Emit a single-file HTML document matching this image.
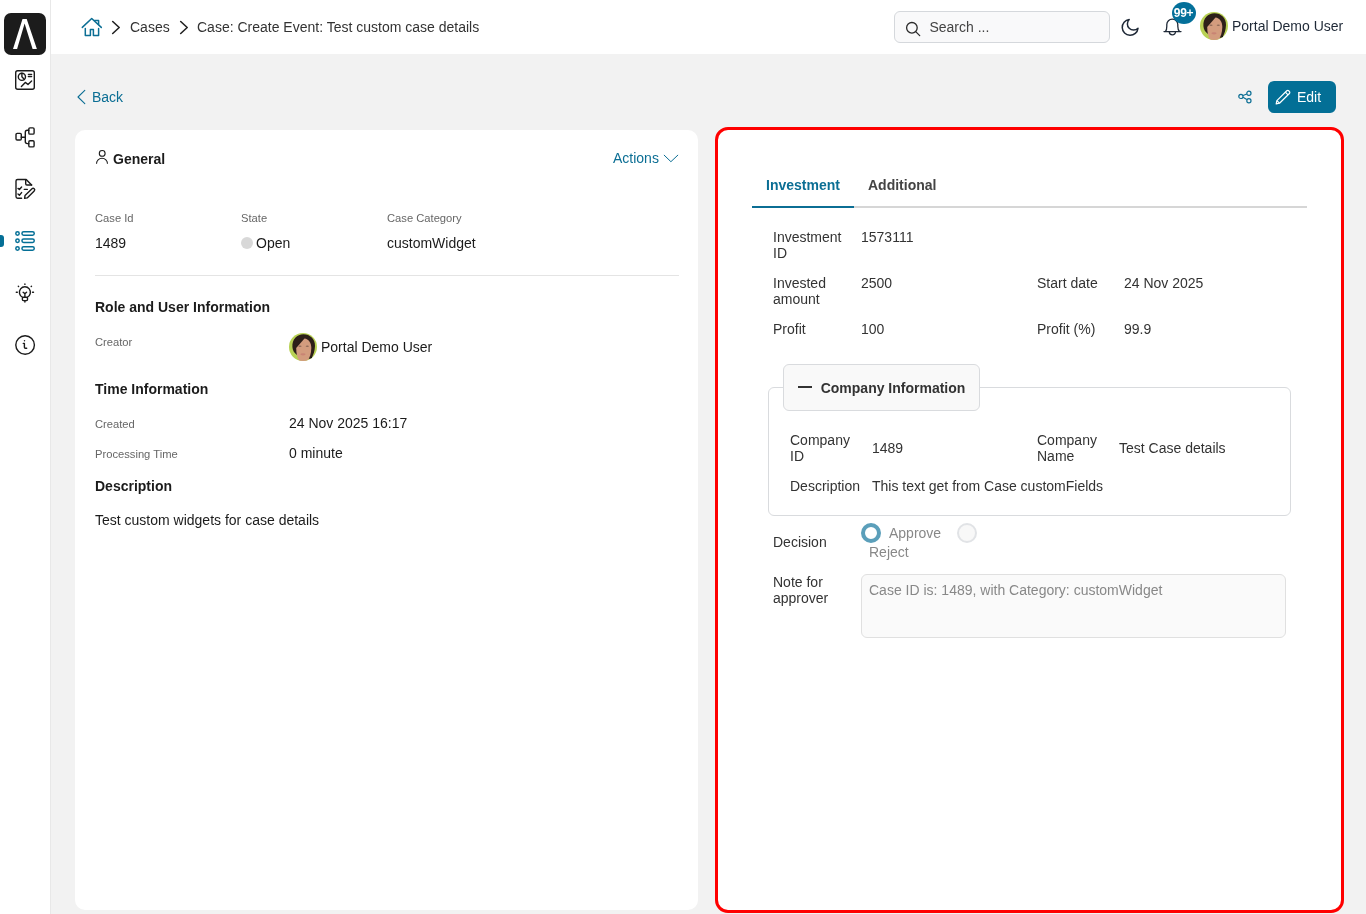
<!DOCTYPE html>
<html><head><meta charset="utf-8">
<style>
*{box-sizing:border-box;margin:0;padding:0}
html,body{width:1366px;height:914px;overflow:hidden;background:#f2f2f2;font-family:"Liberation Sans",sans-serif;color:#1b1b1b;font-size:14px}
body{will-change:transform;position:relative}
.abs{position:absolute;white-space:nowrap;line-height:16px}
svg{position:absolute;overflow:visible}
#side{position:absolute;left:0;top:0;width:51px;height:914px;background:#fff;border-right:1px solid #e8e8e8}
#top{position:absolute;left:51px;top:0;width:1315px;height:54px;background:#fff}
.logo{position:absolute;left:4px;top:13px;width:42px;height:42px;background:#1c1c1c;border-radius:7px}
.teal{color:#0b6e94}
.card{position:absolute;background:#fff;border-radius:10px}
.lbl{font-size:11.2px;color:#666;line-height:13px}
.b{font-weight:700}
.dk{color:#333}
</style></head><body>
<svg width="0" height="0" style="position:absolute;left:0;top:0">
  <defs>
    <clipPath id="avc"><circle cx="14" cy="14" r="14"/></clipPath>
    <symbol id="av" viewBox="0 0 28 28">
      <g clip-path="url(#avc)">
        <rect width="28" height="28" fill="#b8d154"/>
        <path d="M3.4 14C3 6 8 1.2 14.5 1.2C21 1.2 26.3 6 26 13C25.8 18 24.5 22 22.5 25L20 26L8 22C5 20 3.6 17 3.4 14Z" fill="#2d1f19"/>
        <path d="M7.2 15L15.5 5.4C19.5 5.8 22.3 9.5 22.3 15C22.3 21 20.5 26 17.5 28.5H11C8.5 26 7.2 21 7.2 15Z" fill="#d39c7e"/>
        <ellipse cx="11" cy="13.2" rx="1.6" ry="0.8" fill="#7a5a4c" opacity=".75"/>
        <ellipse cx="18.3" cy="13.2" rx="1.6" ry="0.8" fill="#7a5a4c" opacity=".75"/>
        <ellipse cx="14" cy="21.3" rx="2.6" ry="1.1" fill="#c98474"/>
        <path d="M21.5 24.5L23.5 23.5L22 27Z" fill="#111"/>
      </g>
    </symbol>
  </defs>
</svg>
<!-- SIDEBAR -->
<div id="side">
  <div class="logo">
    <svg width="42" height="42" viewBox="0 0 42 42" style="left:0;top:0">
      <polygon points="18.5,6.1 22.7,6.1 32.9,36 28.6,36 20.6,10.5 13.1,36 9,36" fill="#fff"/>
    </svg>
  </div>
  <!-- dashboard -->
  <svg width="50" height="40" style="left:0;top:60px" fill="none" stroke="#1b1b1b" stroke-width="1.4" stroke-linecap="round" stroke-linejoin="round">
    <rect x="15.7" y="10.7" width="18.6" height="18.6" rx="2"/>
    <circle cx="21.9" cy="16.8" r="3.6"/>
    <path d="M21.9 13.2V16.8L24.4 19.4"/>
    <path d="M28.4 14.4H31.6M28.4 16.5H31.6"/>
    <path d="M21.4 26.4L25.3 22.4L28 24.5L31.6 21.1"/>
  </svg>
  <!-- process -->
  <svg width="50" height="40" style="left:0;top:117px" fill="none" stroke="#1b1b1b" stroke-width="1.4" stroke-linecap="round" stroke-linejoin="round">
    <rect x="16" y="16.4" width="5.3" height="6.6" rx="1.2"/>
    <rect x="28.8" y="10.9" width="5.3" height="6.2" rx="1.2"/>
    <rect x="28.8" y="23.7" width="5.3" height="6.2" rx="1.2"/>
    <path d="M21.3 20.2H25.3M28.8 13.3H27.3a2 2 0 0 0 -2 2V24.6a2 2 0 0 0 2 2H28.8"/>
  </svg>
  <!-- tasks -->
  <svg width="50" height="40" style="left:0;top:169px" fill="none" stroke="#1b1b1b" stroke-width="1.4" stroke-linecap="round" stroke-linejoin="round">
    <path d="M21.6 29.2H17.6a1.6 1.6 0 0 1 -1.6 -1.6V12.1a1.6 1.6 0 0 1 1.6 -1.6H26.2L31.6 16.1"/>
    <path d="M25.7 10.6V14.8a1.2 1.2 0 0 0 1.2 1.2H31.6"/>
    <path d="M18 19.4L19.4 20.5L21.6 18M18 25L19.4 26.3L21.6 23.6"/>
    <path d="M24.3 20.4H27.3"/>
    <path d="M24.6 29.3L25 26.6L32 19.8a1.5 1.5 0 0 1 2.2 2.2L27.2 28.9Z"/>
  </svg>
  <!-- cases active -->
  <div style="position:absolute;left:-3px;top:235px;width:7px;height:12px;border-radius:3px;background:#046f96"></div>
  <svg width="50" height="40" style="left:0;top:221px" fill="none" stroke="#046f96" stroke-width="1.5">
    <rect x="15.8" y="10.8" width="3.4" height="3.4" rx="1.7"/>
    <rect x="15.8" y="18.1" width="3.4" height="3.4" rx="1.7"/>
    <rect x="15.8" y="25.8" width="3.4" height="3.4" rx="1.7"/>
    <rect x="21.95" y="10.8" width="12.3" height="3.4" rx="1.7"/>
    <rect x="21.95" y="18.1" width="12.3" height="3.4" rx="1.7"/>
    <rect x="21.95" y="25.8" width="12.3" height="3.4" rx="1.7"/>
  </svg>
  <!-- bulb -->
  <svg width="50" height="40" style="left:0;top:273px" fill="none" stroke="#1b1b1b" stroke-width="1.4" stroke-linecap="round" stroke-linejoin="round">
    <path d="M22.6 24.3a5.5 5.5 0 1 1 4.6 0"/>
    <rect x="22.4" y="24.3" width="5.1" height="3.3" rx="1"/>
    <path d="M24.9 27.6V29.1"/>
    <path d="M23.1 19.3L24.9 20.6L26.6 19.3M24.9 20.6V24.2"/>
    <path d="M24.9 11V11.4M18.3 13.3L18.6 13.6M31.5 13.3L31.2 13.6M16.3 19.3H17.3M32.5 19.3H33.5"/>
  </svg>
  <!-- info -->
  <svg width="50" height="40" style="left:0;top:325px" fill="none" stroke="#1b1b1b" stroke-width="1.4" stroke-linecap="round" stroke-linejoin="round">
    <circle cx="25.1" cy="20" r="9.3"/>
    <path d="M24.5 15.6V15.8"/>
    <path d="M23.3 18.4H24.4V22.2a1 1 0 0 0 1 1H26.7"/>
  </svg>
</div>

<!-- TOPBAR -->
<div id="top">
  <svg width="30" height="30" style="left:26px;top:10px" fill="none" stroke="#0b6e94" stroke-width="1.5" stroke-linecap="round" stroke-linejoin="round">
    <path d="M5.3 17.4L14.7 8.5L24.3 17.4"/>
    <path d="M17.6 10.4H21.6V14.4"/>
    <path d="M8.3 18.6V25.5H13.4V19.5H16.4V25.5H21.6V18.6"/>
  </svg>
  <svg width="14" height="20" style="left:58px;top:17px" fill="none" stroke="#222" stroke-width="1.6" stroke-linecap="round" stroke-linejoin="round">
    <path d="M3.7 4.5L10.2 10.5L3.7 16.5"/>
  </svg>
  <div class="abs dk" style="left:79px;top:19px;color:#333">Cases</div>
  <svg width="14" height="20" style="left:126px;top:17px" fill="none" stroke="#222" stroke-width="1.6" stroke-linecap="round" stroke-linejoin="round">
    <path d="M3.7 4.5L10.2 10.5L3.7 16.5"/>
  </svg>
  <div class="abs" style="left:146px;top:19px;color:#333">Case: Create Event: Test custom case details</div>
  <div style="position:absolute;left:843px;top:11px;width:216px;height:32px;background:#f9f9fa;border:1px solid #d5d8dc;border-radius:6px"></div>
  <svg width="24" height="24" style="left:849px;top:16px" fill="none" stroke="#2b2b2b" stroke-width="1.3" stroke-linecap="round">
    <circle cx="11.9" cy="11.8" r="5.3"/>
    <path d="M15.7 15.6L19.7 19.6"/>
  </svg>
  <div class="abs" style="left:878.4px;top:19px;color:#444">Search ...</div>
  <!-- moon -->
  <svg width="30" height="30" viewBox="1120 10 30 30" style="left:1069px;top:10px" fill="none" stroke="#1f2937" stroke-width="1.5" stroke-linecap="round" stroke-linejoin="round">
    <path d="M1129.2 19.5A7.9 7.9 0 1 0 1138 28.3A6.2 6.2 0 0 1 1129.2 19.5Z"/>
  </svg>
  <!-- bell -->
  <svg width="24" height="24" style="left:1109px;top:15px" fill="none" stroke="#1f2937" stroke-width="1.3" stroke-linecap="round" stroke-linejoin="round">
    <path d="M4 16.6H21M5.5 16.4C6.8 15 6.8 13.5 6.8 11.3V9.6a5.5 5.5 0 0 1 11 0V11.3C17.8 13.5 17.8 15 19.5 16.4"/>
    <path d="M9.3 16.8a3.1 3.1 0 0 0 6.2 0"/>
  </svg>
  <div style="position:absolute;left:1121px;top:2px;width:24px;height:22px;border-radius:50%;background:#04709a"></div>
  <div class="abs b" style="left:1121px;top:7px;width:23px;text-align:center;color:#fff;font-size:12px;line-height:13px;letter-spacing:-0.3px">99+</div>
  <!-- avatar -->
  <svg width="28" height="28" viewBox="0 0 28 28" style="left:1149px;top:12px"><use href="#av"/></svg>
  <div class="abs" style="left:1181px;top:18px;color:#1f2937">Portal Demo User</div>
</div>

<!-- BACK / EDIT -->
<svg width="12" height="20" style="left:74px;top:87px" fill="none" stroke="#0b6e94" stroke-width="1.1" stroke-linecap="round" stroke-linejoin="round">
  <path d="M10.8 3.3L4 10L10.8 16.7"/>
</svg>
<div class="abs teal" style="left:92px;top:89px">Back</div>
<svg width="20" height="20" style="left:1235px;top:87px" fill="none" stroke="#0b6e94" stroke-width="1.2">
  <circle cx="5.9" cy="9.4" r="2.1"/>
  <circle cx="13.9" cy="6.3" r="2.1"/>
  <circle cx="13.9" cy="13.7" r="2.1"/>
  <path d="M8 8.5L11.8 7M8 10.3L11.8 12.6"/>
</svg>
<div style="position:absolute;left:1268px;top:81px;width:68px;height:32px;background:#036f96;border-radius:6px"></div>
<svg width="20" height="20" style="left:1273px;top:87px" fill="none" stroke="#fff" stroke-width="1.2" stroke-linejoin="round">
  <path d="M3.2 16.8L3.9 13.6L13.8 3.8a1.4 1.4 0 0 1 2 0L16.4 4.5a1.4 1.4 0 0 1 0 2L6.5 16.2Z"/>
  <path d="M12.4 5.2L15 7.8M3.9 13.6L6.5 16.2"/>
</svg>
<div class="abs" style="left:1297px;top:89px;color:#fff">Edit</div>

<!-- LEFT CARD -->
<div class="card" style="left:75px;top:130px;width:623px;height:780px">
  <svg width="16" height="20" style="left:18px;top:16px" fill="none" stroke="#1b1b1b" stroke-width="1.1">
    <circle cx="9.2" cy="7.4" r="2.9"/>
    <path d="M3.5 17.8a5.5 5.5 0 0 1 11 0"/>
  </svg>
  <div class="abs b" style="left:38px;top:21px">General</div>
  <div class="abs teal" style="left:538px;top:20px">Actions</div>
  <svg width="18" height="12" style="left:587px;top:22px" fill="none" stroke="#0b6e94" stroke-width="1" stroke-linecap="round" stroke-linejoin="round">
    <path d="M2.2 3.2L8.9 9.7L15.8 3.2"/>
  </svg>
  <div class="abs lbl" style="left:20px;top:82px">Case Id</div>
  <div class="abs lbl" style="left:166px;top:82px">State</div>
  <div class="abs lbl" style="left:312px;top:82px">Case Category</div>
  <div class="abs" style="left:20px;top:105px">1489</div>
  <div style="position:absolute;left:166px;top:107px;width:12px;height:12px;border-radius:50%;background:#d8d8d8"></div>
  <div class="abs" style="left:181px;top:105px">Open</div>
  <div class="abs" style="left:312px;top:105px">customWidget</div>
  <div style="position:absolute;left:20px;top:145px;width:584px;height:1px;background:#e4e4e4"></div>
  <div class="abs b" style="left:20px;top:169px">Role and User Information</div>
  <div class="abs lbl" style="left:20px;top:206px">Creator</div>
  <svg width="28" height="28" viewBox="0 0 28 28" style="left:214px;top:203px"><use href="#av"/></svg>
  <div class="abs" style="left:246px;top:209px">Portal Demo User</div>
  <div class="abs b" style="left:20px;top:251px">Time Information</div>
  <div class="abs lbl" style="left:20px;top:288px">Created</div>
  <div class="abs" style="left:214px;top:285px">24 Nov 2025 16:17</div>
  <div class="abs lbl" style="left:20px;top:318px">Processing Time</div>
  <div class="abs" style="left:214px;top:315px">0 minute</div>
  <div class="abs b" style="left:20px;top:348px">Description</div>
  <div class="abs" style="left:20px;top:382px">Test custom widgets for case details</div>
</div>

<!-- RIGHT CARD -->
<div class="card" style="left:715px;top:127px;width:629px;height:786px;border:3px solid #f00;border-radius:13px"></div>
<div id="rc" style="position:absolute;left:0;top:0">
  <div class="abs b teal" style="left:766px;top:177px">Investment</div>
  <div class="abs b" style="left:868px;top:177px;color:#444">Additional</div>
  <div style="position:absolute;left:752px;top:206px;width:555px;height:2px;background:#d6d6d6"></div>
  <div style="position:absolute;left:752px;top:206px;width:102px;height:2px;background:#0b6e94"></div>

  <div class="abs dk" style="left:773px;top:229px">Investment<br>ID</div>
  <div class="abs dk" style="left:861px;top:229px">1573111</div>
  <div class="abs dk" style="left:773px;top:275px">Invested<br>amount</div>
  <div class="abs dk" style="left:861px;top:275px">2500</div>
  <div class="abs dk" style="left:1037px;top:275px">Start date</div>
  <div class="abs dk" style="left:1124px;top:275px">24 Nov 2025</div>
  <div class="abs dk" style="left:773px;top:321px">Profit</div>
  <div class="abs dk" style="left:861px;top:321px">100</div>
  <div class="abs dk" style="left:1037px;top:321px">Profit (%)</div>
  <div class="abs dk" style="left:1124px;top:321px">99.9</div>

  <div style="position:absolute;left:768px;top:387px;width:523px;height:129px;border:1px solid #d9dbde;border-radius:6px"></div>
  <div style="position:absolute;left:783px;top:364px;width:197px;height:47px;border:1px solid #d9dbde;border-radius:6px;background:#f9f9f9"></div>
  <div style="position:absolute;left:798px;top:386.2px;width:14px;height:1.6px;background:#333"></div>
  <div class="abs b dk" style="left:820.7px;top:380px">Company Information</div>
  <div class="abs dk" style="left:790px;top:432px">Company<br>ID</div>
  <div class="abs dk" style="left:872px;top:440px">1489</div>
  <div class="abs dk" style="left:1037px;top:432px">Company<br>Name</div>
  <div class="abs dk" style="left:1119px;top:440px">Test Case details</div>
  <div class="abs dk" style="left:790px;top:478px">Description</div>
  <div class="abs dk" style="left:872px;top:478px">This text get from Case customFields</div>

  <div class="abs dk" style="left:773px;top:534px">Decision</div>
  <div style="position:absolute;left:861px;top:523px;width:20px;height:20px;border-radius:50%;border:4px solid #5b9fba;background:#fff"></div>
  <div class="abs" style="left:889px;top:525px;color:#888">Approve</div>
  <div style="position:absolute;left:957px;top:523px;width:20px;height:20px;border-radius:50%;border:2px solid #e1e3e6;background:#f8f8f8"></div>
  <div class="abs" style="left:869px;top:544px;color:#888">Reject</div>
  <div class="abs dk" style="left:773px;top:574px">Note for<br>approver</div>
  <div style="position:absolute;left:861px;top:574px;width:425px;height:64px;border:1px solid #e0e0e0;border-radius:6px;background:#fafafa"></div>
  <div class="abs" style="left:869px;top:582px;color:#888">Case ID is: 1489, with Category: customWidget</div>
</div>
</body></html>
